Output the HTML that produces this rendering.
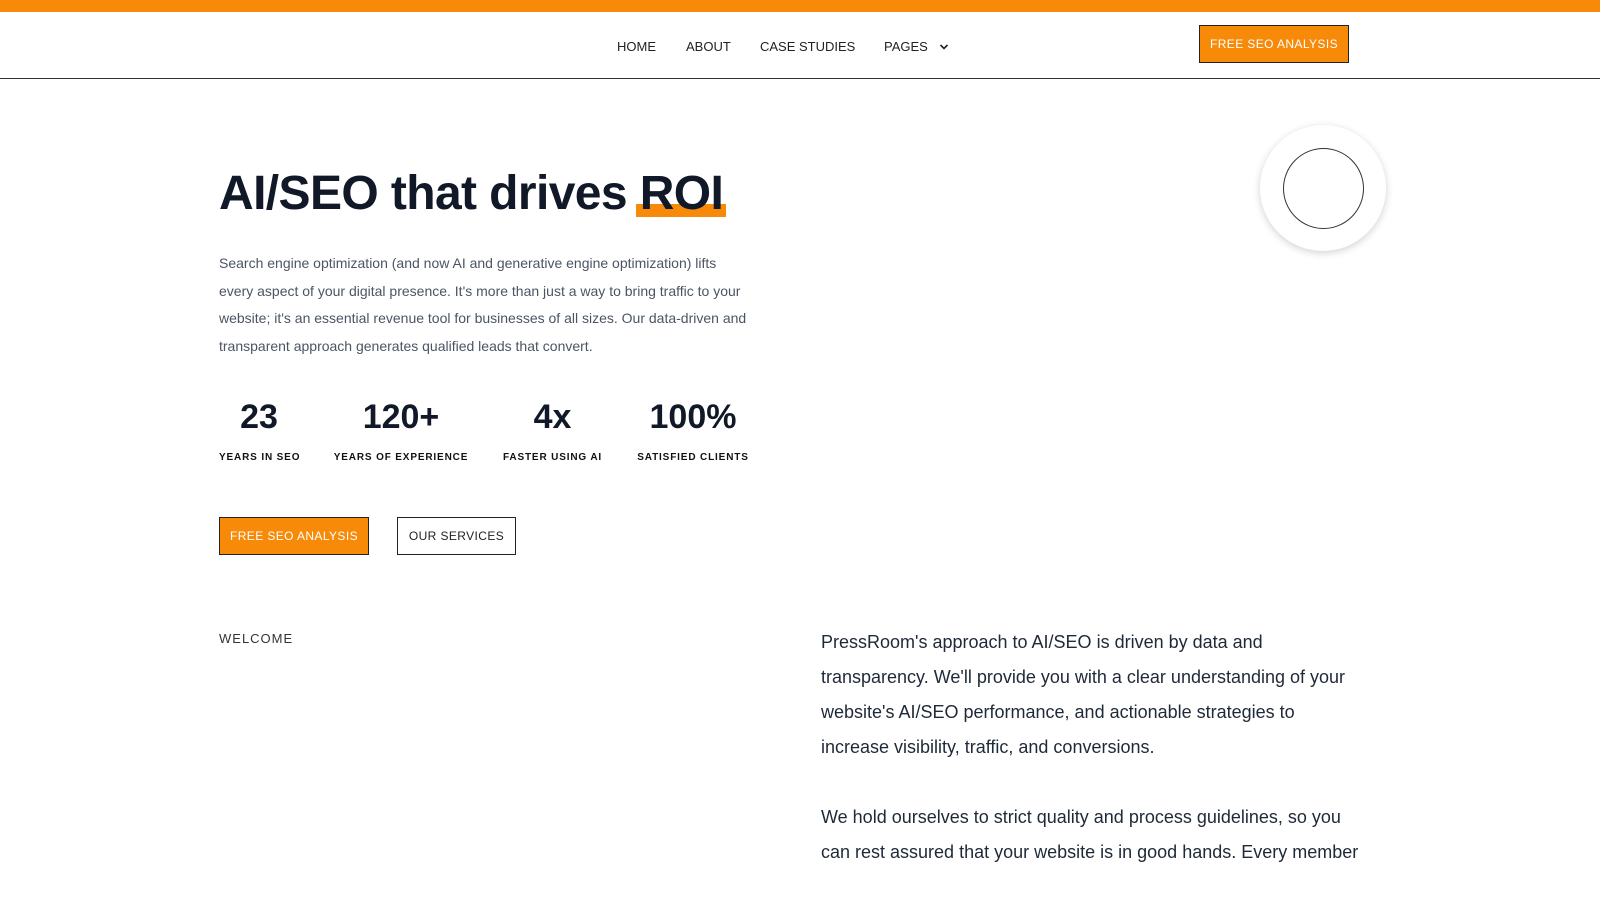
<!DOCTYPE html>
<html><head><meta charset="utf-8"><style>
*{margin:0;padding:0;box-sizing:border-box}
body{width:1600px;height:900px;overflow:hidden;background:#fff;font-family:"Liberation Sans",Arial,sans-serif;color:#111827;position:relative}
.top{position:absolute;left:0;top:0;width:1600px;height:12px;background:#f88a0a}
.hdr{position:absolute;left:0;top:12px;width:1600px;height:67px;border-bottom:1px solid #333}
.nav a{position:absolute;top:27px;font-size:13px;color:#222;text-decoration:none}
.btn{position:absolute;display:flex;align-items:center;justify-content:center;font-size:12px;letter-spacing:.4px}
.or{background:#f88a0a;color:#fff;border:1px solid #222}
.wh{background:#fff;color:#222;border:1px solid #222}
h1{position:absolute;left:219px;top:166px;font-size:48px;font-weight:700;color:#111827;letter-spacing:-.6px;white-space:nowrap}
h1 span{position:relative;display:inline-block}
h1 span:before{content:"";position:absolute;left:-4px;right:-3px;bottom:4px;height:13px;background:#f88a0a;z-index:-1}
.p{position:absolute;left:219px;top:250px;width:532px;font-size:14px;line-height:27.5px;color:#4b5563}
.st{position:absolute;top:398px;text-align:center;white-space:nowrap}
.st b{display:block;font-size:34px;color:#111827}
.st i{display:block;font-style:normal;font-weight:700;font-size:10px;letter-spacing:.85px;margin-top:15px;color:#111}
.wel{position:absolute;left:219px;top:631px;font-size:13px;letter-spacing:1px;color:#333}
.r{position:absolute;left:821px;top:625px;width:540px;font-size:18px;line-height:35px;color:#1f2937}
.c1{position:absolute;left:1260px;top:125px;width:126px;height:126px;border-radius:50%;background:#fff;box-shadow:0 2px 8px rgba(0,0,0,.18)}
.c2{position:absolute;left:1283px;top:148px;width:81px;height:81px;border-radius:50%;border:1px solid #333}
</style></head><body>
<div class="top"></div>
<div class="hdr"></div>
<div class="nav">
<a style="left:617px;top:39px">HOME</a>
<a style="left:686px;top:39px">ABOUT</a>
<a style="left:760px;top:39px">CASE STUDIES</a>
<a style="left:884px;top:39px">PAGES</a>
<svg style="position:absolute;left:939px;top:43px" width="10" height="8" viewBox="0 0 10 8"><path d="M1.5 2 L5 5.5 L8.5 2" fill="none" stroke="#222" stroke-width="1.6"/></svg>
</div>
<div class="btn or" style="left:1199px;top:25px;width:150px;height:38px">FREE SEO ANALYSIS</div>
<div class="c1"></div><div class="c2"></div>
<h1>AI/SEO that drives <span>ROI</span></h1>
<div class="p">Search engine optimization (and now AI and generative engine optimization) lifts every aspect of your digital presence. It's more than just a way to bring traffic to your website; it's an essential revenue tool for businesses of all sizes. Our data-driven and transparent approach generates qualified leads that convert.</div>
<div class="st" style="left:219px;width:80px"><b>23</b><i>YEARS IN SEO</i></div>
<div class="st" style="left:332px;width:138px"><b>120+</b><i>YEARS OF EXPERIENCE</i></div>
<div class="st" style="left:501px;width:103px"><b>4x</b><i>FASTER USING AI</i></div>
<div class="st" style="left:636px;width:114px"><b>100%</b><i>SATISFIED CLIENTS</i></div>
<div class="btn or" style="left:219px;top:517px;width:150px;height:38px">FREE SEO ANALYSIS</div>
<div class="btn wh" style="left:397px;top:517px;width:119px;height:38px">OUR SERVICES</div>
<div class="wel">WELCOME</div>
<div class="r">PressRoom's approach to AI/SEO is driven by data and transparency. We'll provide you with a clear understanding of your website's AI/SEO performance, and actionable strategies to increase visibility, traffic, and conversions.<br><br>We hold ourselves to strict quality and process guidelines, so you can rest assured that your website is in good hands. Every member</div>
</body></html>
